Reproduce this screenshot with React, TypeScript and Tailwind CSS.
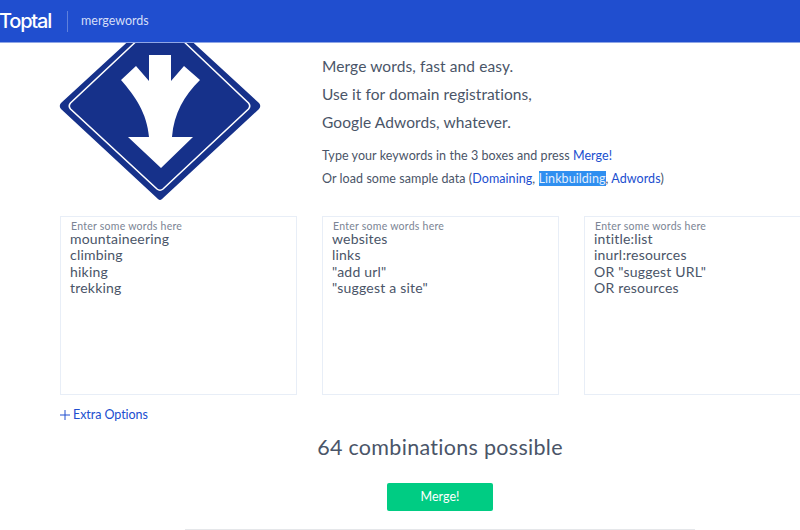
import React from 'react';

const boxes = [
  { id: 'one', words: 'mountaineering\nclimbing\nhiking\ntrekking' },
  { id: 'two', words: 'websites\nlinks\n"add url"\n"suggest a site"' },
  { id: 'three', words: 'intitle:list\ninurl:resources\nOR "suggest URL"\nOR resources' },
];

const Logo = () => (
  <svg viewBox="0 0 202 190" className="w-[202px] h-[190px] shrink-0" aria-hidden="true">
    <path d="M101 1 L200 92 Q202.500 95 200 98 L103 188 Q101 190 99 188 L2 98 Q-0.500 95 2 92 Z" fill="#16318a" />
    <path d="M101 8 L189.500 92 Q192 95 189.500 98 L104 178 Q101 180.500 98 178 L11.500 98 Q9 95 11.500 92 Z" fill="none" stroke="#fff" strokeWidth="1.600" />
    <path d="M90 44 H112 V70 L125 55 L141 69 C125 85 115 102 113 126 H134 L102 157 L69 126 H90 C88 102 76 85 62 69 L77 55 L90 70 Z" fill="#fff" />
  </svg>
);

export default function App() {
  return (
    <div className="w-[800px] h-[530px] overflow-hidden bg-white text-[#4a5568] font-['Lato','Liberation_Sans',sans-serif]">
      {/* Header */}
      <header className="relative z-10 h-[43px] bg-[#204ecf] border-b border-[#8fa6e6] flex items-center text-white">
        <span className="-ml-px w-[53px] text-[20px] font-medium tracking-[-1.200px] font-['Inter',sans-serif] whitespace-nowrap">Toptal</span>
        <div className="w-px h-[21px] bg-[#5f80dc] ml-[15px] mr-[13px]" />
        <span className="text-[12.500px] text-[#d5def7]">mergewords</span>
      </header>

      {/* Intro */}
      <section className="flex pl-[59px] h-[173px]">
        <div className="-mt-[32px]">
          <Logo />
        </div>
        <div className="ml-[61px] pt-[13px]">
          <p className="text-[15.500px] tracking-[0.1px] leading-[20px] mb-[7.500px]">Merge words, fast and easy.</p>
          <p className="text-[15.500px] tracking-[0.05px] leading-[20px] mb-[8.500px]">Use it for domain registrations,</p>
          <p className="text-[15.500px] tracking-[0.1px] leading-[20px] mb-[16px]">Google Adwords, whatever.</p>
          <p className="text-[12.500px] tracking-[0.07px] leading-[16px] mb-[7px]">
            Type your keywords in the 3 boxes and press <a className="text-[#204ecf]">Merge!</a>
          </p>
          <p className="text-[12.500px] tracking-[0.07px] leading-[16px] whitespace-nowrap">
            Or load some sample data (<a className="text-[#204ecf]">Domaining</a>,{' '}
            <a className="bg-[#2f8ff0] text-[#e3eefc]">Linkbuilding</a>, <a className="text-[#204ecf]">Adwords</a>)
          </p>
        </div>
      </section>

      {/* Word boxes */}
      <section className="flex gap-[25.500px] pl-[60px] w-[900px]">
        {boxes.map((box) => (
          <div key={box.id} className="relative w-[236.500px] h-[179px] shrink-0">
            <label htmlFor={box.id} className="absolute left-[11px] top-[4px] text-[10.500px] tracking-[0.25px] leading-[13px] text-[#7b8494]">
              Enter some words here
            </label>
            <textarea
              id={box.id}
              readOnly
              defaultValue={box.words}
              className="w-full h-full resize-none border border-[#e8eef7] pl-[9px] pt-[14px] text-[14px] tracking-[0.2px] leading-[16.400px] outline-none"
            />
          </div>
        ))}
      </section>

      {/* Options */}
      <div className="pl-[60px] mt-[12px] text-[12.500px] tracking-[-0.05px] leading-[16px] text-[#204ecf] flex items-center gap-[3px]">
        <svg viewBox="0 0 10 10" className="w-[10px] h-[10px]" aria-hidden="true">
          <path d="M5 0 V10 M0 5 H10" stroke="#204ecf" strokeWidth="1" fill="none" />
        </svg>
        <a>Extra Options</a>
      </div>

      {/* The page is wider than the window, so its centre sits at x=440 */}
      <div className="w-[880px]">
        <h2 className="mt-[10px] text-center text-[21.500px] leading-[28px] tracking-[0.3px]">64 combinations possible</h2>

        <div className="mt-[22px] flex justify-center">
          <button className="w-[106px] h-[28px] rounded-[2px] bg-[#00cc83] text-white text-[12.500px]">Merge!</button>
        </div>

        <hr className="mt-[18px] mx-auto w-[510px] border-t border-[#e5e7ea]" />
      </div>
    </div>
  );
}
